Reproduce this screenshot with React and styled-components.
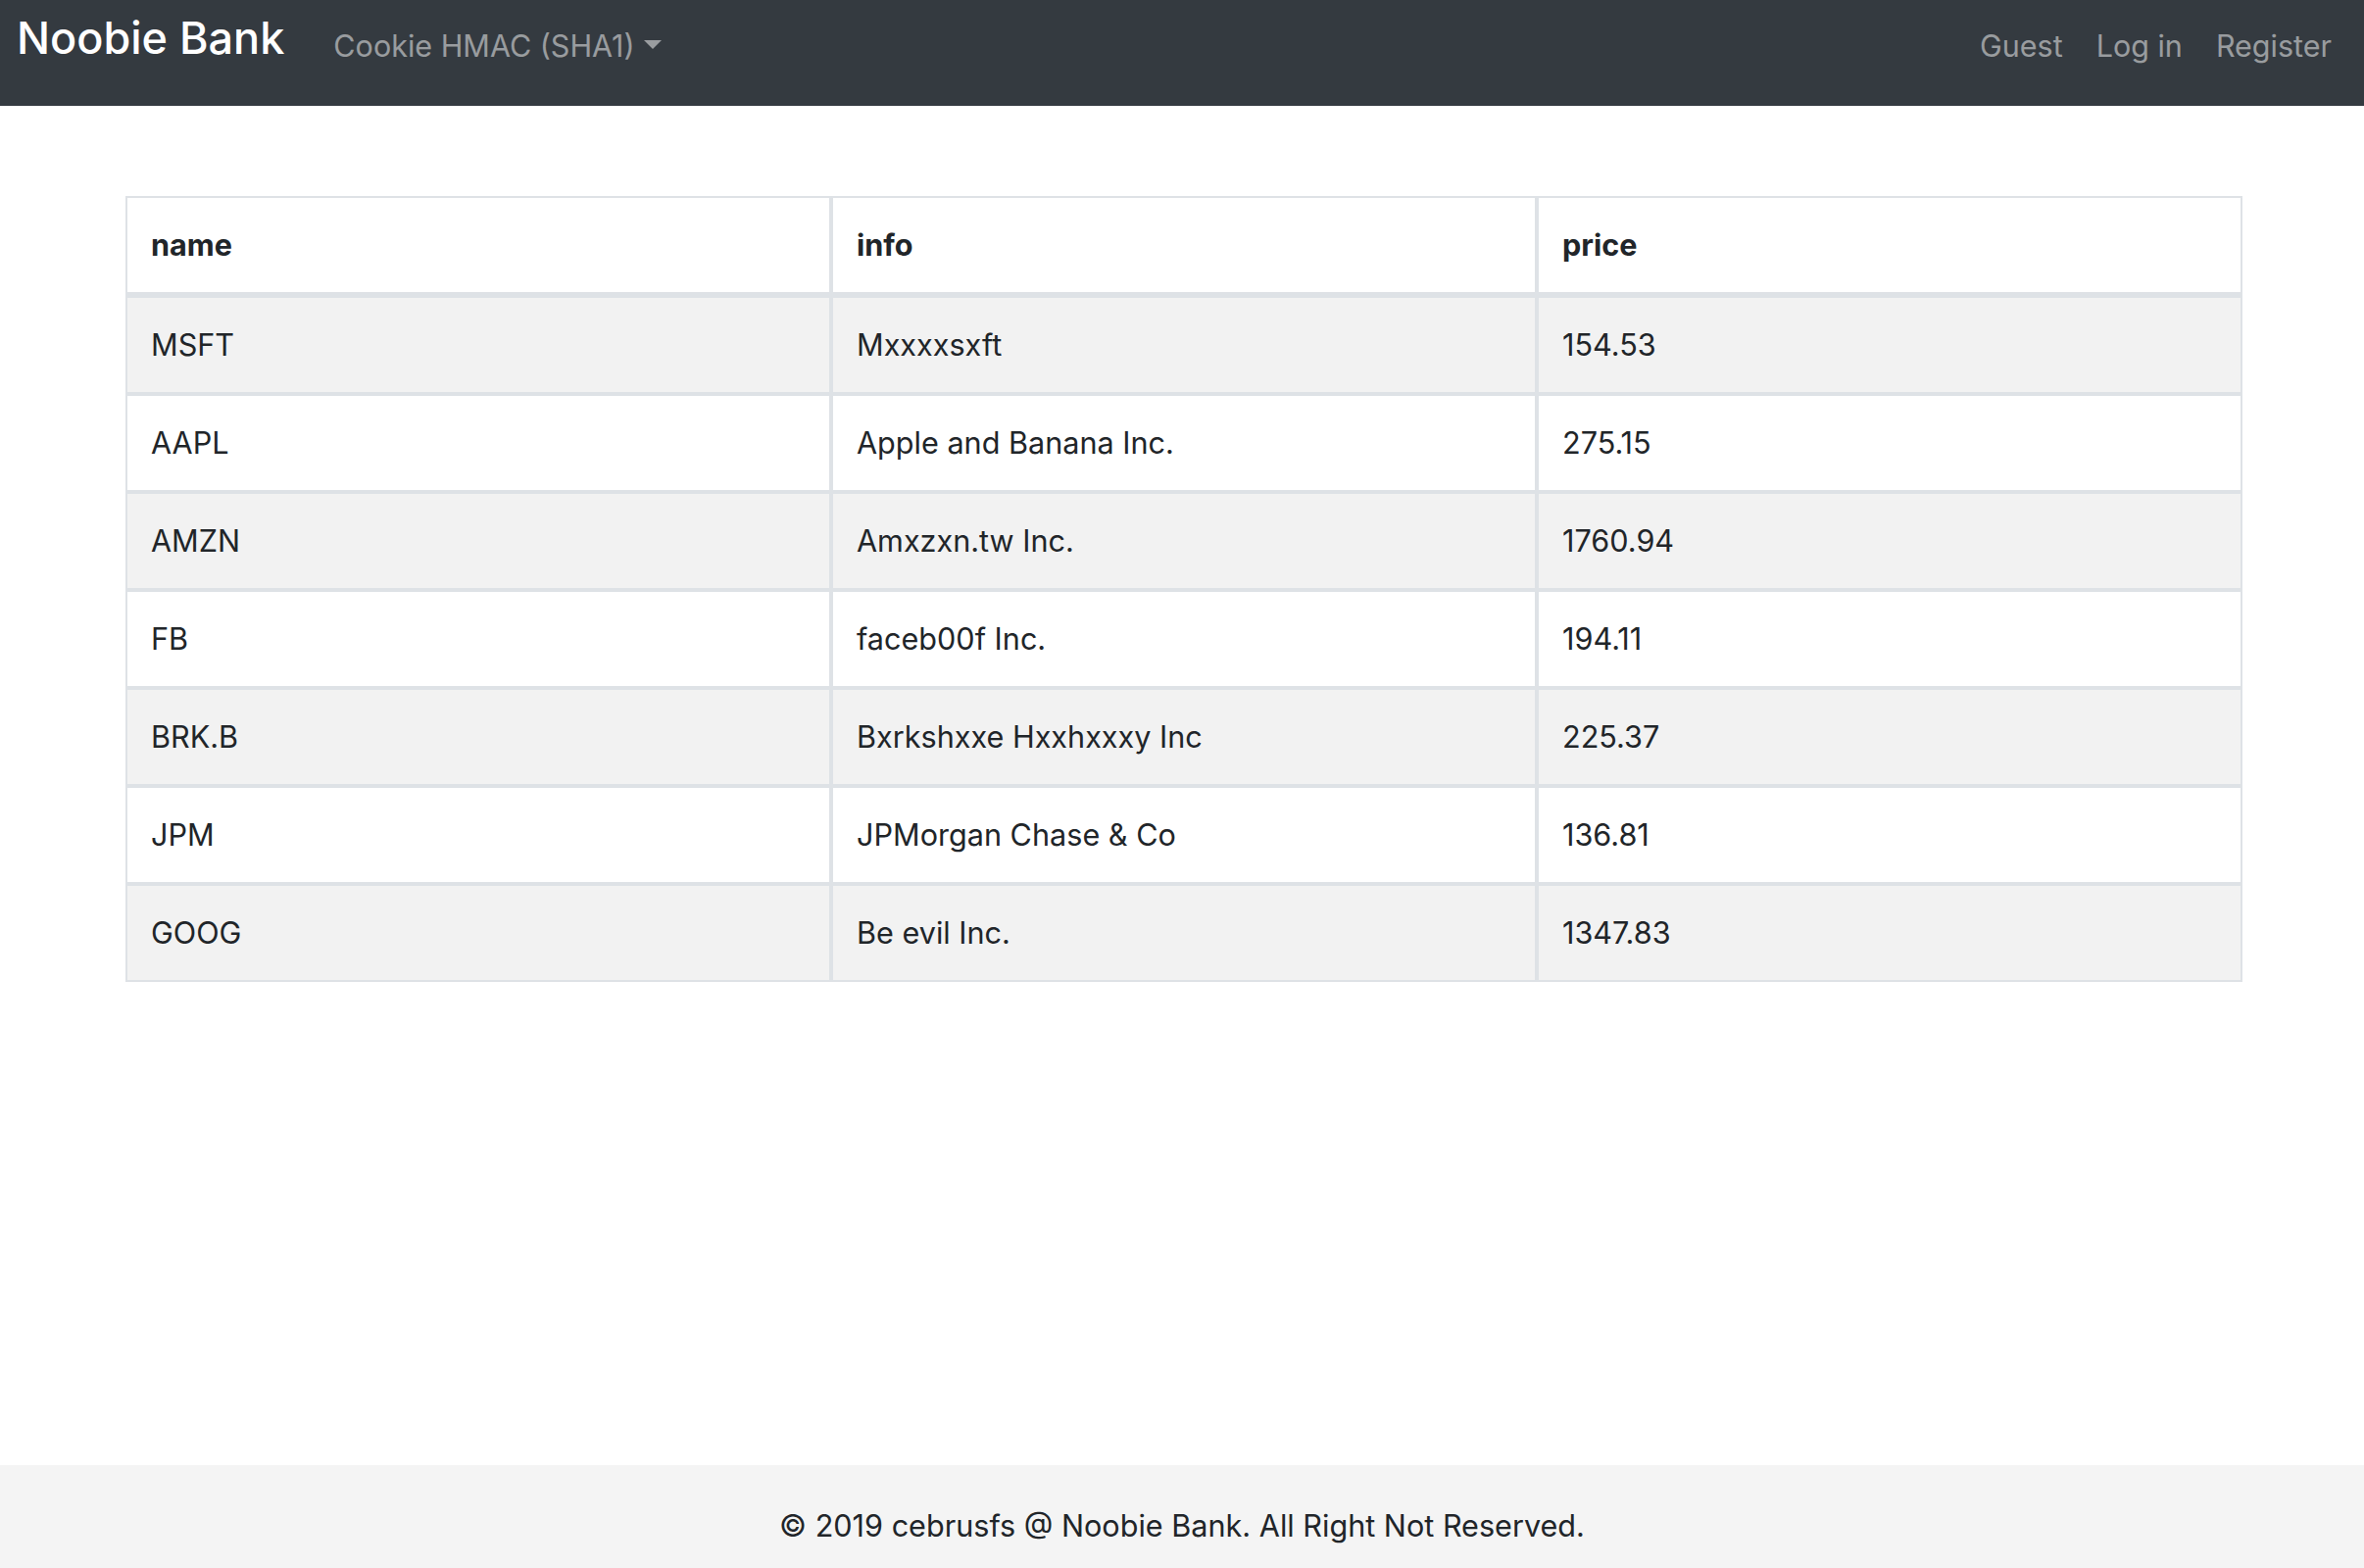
import React from "react";
import styled, { createGlobalStyle } from "styled-components";

const GlobalStyle = createGlobalStyle`
  * {
    box-sizing: border-box;
  }
  html, body {
    margin: 0;
    padding: 0;
    background: #fff;
  }
  body {
    font-family: Inter, "Liberation Sans", sans-serif;
    font-size: 30.6px;
    line-height: 48px;
    color: #212529;
  }
`;

const Page = styled.div`
  min-height: 100vh;
  display: flex;
  flex-direction: column;
`;

const Navbar = styled.nav`
  height: 108px;
  background: #343a40;
  display: flex;
  align-items: flex-start;
  padding: 0 33px 0 17px;
`;

const Brand = styled.a`
  margin-top: 6px;
  font-size: 45px;
  line-height: 66px;
  font-weight: 500;
  color: #fff;
  text-decoration: none;
  margin-right: 50px;
`;

const NavList = styled.div`
  display: flex;
  align-items: baseline;
  gap: 34px;
  margin-top: 23px;
  margin-left: ${(p) => (p.$right ? "auto" : "0")};
`;

const NavLink = styled.a`
  color: rgba(255, 255, 255, 0.5);
  text-decoration: none;
  font-size: 30.5px;
  line-height: 48px;
  white-space: nowrap;
`;

const Caret = styled.span`
  display: inline-block;
  margin-left: 9px;
  vertical-align: 8px;
  border-top: 9px solid rgba(255, 255, 255, 0.5);
  border-left: 9px solid transparent;
  border-right: 9px solid transparent;
`;

const Main = styled.main`
  padding: 92px 124px 0 128px;
`;

const Table = styled.table`
  width: 100%;
  table-layout: fixed;
  border-collapse: separate;
  border-spacing: 0;
`;

const HeadCell = styled.th`
  text-align: left;
  font-weight: 700;
  padding: 24px 24px;
  border: 2px solid #dee2e6;
  border-bottom-width: 4px;
`;

const Row = styled.tr`
  background: ${(p) => (p.$striped ? "#f2f2f2" : "#fff")};
`;

const Cell = styled.td`
  padding: 24px 24px;
  border: 2px solid #dee2e6;
`;

const Footer = styled.footer`
  margin-top: auto;
  background: #f4f4f4;
  padding: 38px 0 19px;
  text-align: center;
`;

const stocks = [
  ["MSFT", "Mxxxxsxft", "154.53"],
  ["AAPL", "Apple and Banana Inc.", "275.15"],
  ["AMZN", "Amxzxn.tw Inc.", "1760.94"],
  ["FB", "faceb00f Inc.", "194.11"],
  ["BRK.B", "Bxrkshxxe Hxxhxxxy Inc", "225.37"],
  ["JPM", "JPMorgan Chase & Co", "136.81"],
  ["GOOG", "Be evil Inc.", "1347.83"],
];

export default function App() {
  return (
    <Page>
      <GlobalStyle />
      <Navbar>
        <Brand href="#">Noobie Bank</Brand>
        <NavList>
          <NavLink href="#">
            Cookie HMAC (SHA1)
            <Caret />
          </NavLink>
        </NavList>
        <NavList $right>
          <NavLink href="#">Guest</NavLink>
          <NavLink href="#">Log in</NavLink>
          <NavLink href="#">Register</NavLink>
        </NavList>
      </Navbar>
      <Main>
        <Table>
          <thead>
            <tr>
              <HeadCell>name</HeadCell>
              <HeadCell>info</HeadCell>
              <HeadCell>price</HeadCell>
            </tr>
          </thead>
          <tbody>
            {stocks.map(([name, info, price], i) => (
              <Row key={name} $striped={i % 2 === 0}>
                <Cell>{name}</Cell>
                <Cell>{info}</Cell>
                <Cell>{price}</Cell>
              </Row>
            ))}
          </tbody>
        </Table>
      </Main>
      <Footer>© 2019 cebrusfs @ Noobie Bank. All Right Not Reserved.</Footer>
    </Page>
  );
}
